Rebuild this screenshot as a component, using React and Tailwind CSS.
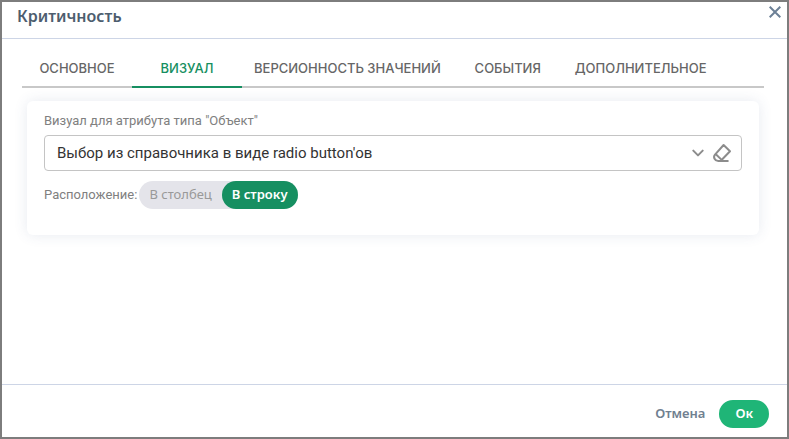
import React, { useState } from 'react';

const TABS = ['Основное', 'Визуал', 'Версионность значений', 'События', 'Дополнительное'];

const OPTIONS = ["Выбор из справочника в виде radio button'ов", 'Выбор из справочника'];

const LAYOUTS = [
  { id: 'column', label: 'В столбец' },
  { id: 'row', label: 'В строку' },
];

const DialogHeader = () => (
  <header className="flex items-start justify-between h-[37px] pl-[15px] pr-[2px] border-b border-[#cdd5e6]">
    <h1 className="pt-[2px] font-['Noto_Sans',sans-serif] text-base leading-6 font-semibold text-[#4d5d6e]">
      Критичность
    </h1>
    <button type="button" aria-label="Закрыть" className="w-5 h-5 flex items-center justify-center text-[#6c8096]">
      <svg className="w-3 h-3" fill="none" stroke="currentColor" viewBox="0 0 12 12">
        <path strokeWidth={2} d="M0.7 0.7L11.3 11.3M11.3 0.7L0.7 11.3" />
      </svg>
    </button>
  </header>
);

const Tabs = ({ active, onChange }) => (
  <div role="tablist" className="flex border-b-2 border-[#c8c8c8]">
    {TABS.map((tab) => (
      <button
        key={tab}
        type="button"
        role="tab"
        aria-selected={tab === active}
        onClick={() => onChange(tab)}
        className={`h-[38px] min-w-[110px] px-3 -mb-[2px] border-b-2 font-[Inter,sans-serif] text-[13px] leading-4 font-medium uppercase whitespace-nowrap ${
          tab === active ? 'border-[#168f61] text-[#168f61]' : 'border-transparent text-[#666666]'
        }`}
      >
        {tab}
      </button>
    ))}
  </div>
);

const VisualSelect = () => {
  const [value, setValue] = useState(OPTIONS[0]);

  return (
    <div>
      <label htmlFor="visual" className="block mb-1 text-[13px] leading-5 text-[#808080]">
        Визуал для атрибута типа "Объект"
      </label>
      <div className="flex items-center h-9 pr-[9px] border border-[#c4c4c4] rounded">
        <select
          id="visual"
          value={value}
          onChange={(e) => setValue(e.target.value)}
          className="flex-1 min-w-0 h-full pl-3 pr-8 appearance-none bg-transparent text-[15px] text-[#333333] outline-none"
        >
          <option value=""></option>
          {OPTIONS.map((option) => (
            <option key={option} value={option}>{option}</option>
          ))}
        </select>
        <svg className="w-3 h-3 mr-2 -ml-3 shrink-0 pointer-events-none text-[#8c8c8c]" fill="none" stroke="currentColor" viewBox="0 0 12 12">
          <path strokeLinecap="round" strokeLinejoin="round" strokeWidth={2} d="M1.3 3.6L6 8.4L10.7 3.6" />
        </svg>
        <button type="button" aria-label="Очистить" onClick={() => setValue('')} className="shrink-0 text-[#8c8c8c]">
          <svg className="w-5 h-5" fill="none" stroke="currentColor" viewBox="0 0 20 20">
            <path strokeLinecap="round" strokeLinejoin="round" strokeWidth={2} d="M15.8 18H6.2C2.9 18 0.8 14.2 3 11.6L11.6 2L18 8.2L8.6 18M3.6 11L9.4 16.6" />
          </svg>
        </button>
      </div>
    </div>
  );
};

const LayoutToggle = () => {
  const [layout, setLayout] = useState('row');

  return (
    <div className="flex items-center gap-[2px] mt-[10px]">
      <span id="layout-label" className="text-[13px] leading-5 text-[#808080]">Расположение:</span>
      <div role="group" aria-labelledby="layout-label" className="flex h-7 rounded-full bg-[#e4e4ea]">
        {LAYOUTS.map(({ id, label }) => (
          <button
            key={id}
            type="button"
            aria-pressed={id === layout}
            onClick={() => setLayout(id)}
            className={`h-7 px-[10px] rounded-full font-['Noto_Sans',sans-serif] text-[13px] ${
              id === layout ? 'bg-[#168f61] text-white font-semibold' : 'text-[#999999]'
            }`}
          >
            {label}
          </button>
        ))}
      </div>
    </div>
  );
};

const DialogFooter = () => (
  <footer className="flex items-center justify-end gap-[14px] h-[53px] pr-[18px] pt-[6px] border-t border-[#cdd5e6] font-['Noto_Sans',sans-serif] text-[13px] font-semibold">
    <button type="button" className="text-[#708090]">Отмена</button>
    <button type="button" className="h-7 px-4 rounded-full bg-[#1fb577] text-white">Ок</button>
  </footer>
);

const App = () => {
  const [tab, setTab] = useState('Визуал');

  return (
    <div className="min-h-screen flex flex-col bg-white border-2 border-[#7d7d7d] font-[Roboto,sans-serif]">
      <DialogHeader />
      <main className="flex-1 pl-5 pr-[23px] pt-[11px]">
        <Tabs active={tab} onChange={setTab} />
        <section className="mt-[13px] mx-[5px] px-[17px] pt-[10px] pb-[26px] rounded-md bg-white shadow-[0_0_14px_rgba(60,80,130,0.12)]">
          <VisualSelect />
          <LayoutToggle />
        </section>
      </main>
      <DialogFooter />
    </div>
  );
};

export default App;
